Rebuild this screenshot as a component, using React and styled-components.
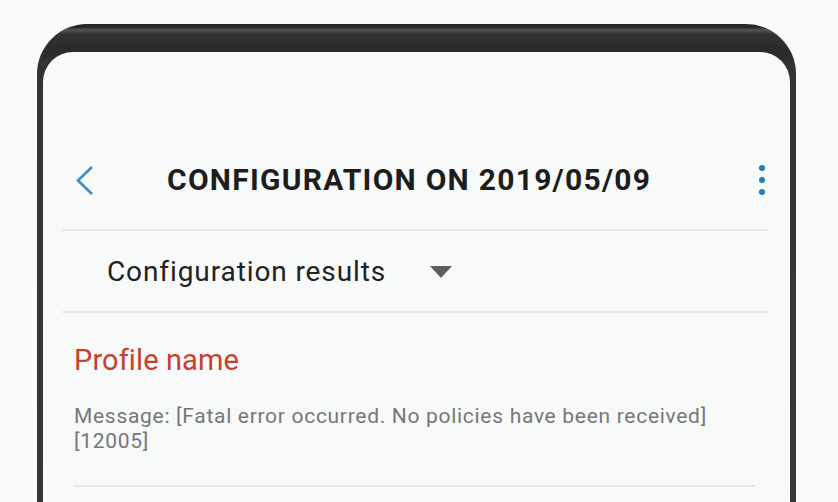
import React from 'react';
import styled, { createGlobalStyle } from 'styled-components';

const GlobalStyle = createGlobalStyle`
  html, body {
    margin: 0;
    padding: 0;
    background: #f9fafa;
    font-family: Roboto, "Liberation Sans", sans-serif;
    overflow: hidden;
  }
`;

const Page = styled.div`
  width: 838px;
  height: 502px;
  padding: 24px 0 0 37px;
  box-sizing: border-box;
  overflow: hidden;
`;

const Frame = styled.div`
  width: 759px;
  height: 520px;
  box-sizing: border-box;
  padding: 28px 6px 0 6px;
  border-radius: 50px 50px 0 0;
  background: linear-gradient(
    to bottom,
    #262626 0px,
    #262626 3px,
    #555 6px,
    #333 10px,
    #2a2a2a 28px,
    #333 40px,
    #383838 100%
  );
`;

const Screen = styled.div`
  height: 100%;
  background: #f8f9f9;
  border-radius: 30px 30px 0 0;
  padding-top: 88px;
  box-sizing: border-box;
`;

const Header = styled.div`
  display: flex;
  align-items: center;
  height: 89px;
  box-sizing: border-box;
  padding: 0 25px 10px 31px;
`;

const BackButton = styled.button`
  display: flex;
  align-items: center;
  background: none;
  border: 0;
  padding: 0;
  width: 24px;
  height: 36px;
  cursor: pointer;
`;

const Title = styled.h1`
  margin: 0 0 0 69px;
  font-size: 30px;
  font-weight: 700;
  color: #1d1d1d;
  letter-spacing: 1.25px;
  white-space: nowrap;
`;

const Kebab = styled.div`
  margin-left: auto;
  display: flex;
  flex-direction: column;
  gap: 6px;
  span {
    width: 6px;
    height: 6px;
    border-radius: 50%;
    background: #1f7cbf;
  }
`;

const Divider = styled.div`
  height: 2px;
  background: #e9e7e7;
  margin: ${p => p.$inset ? '0 35px 0 31px' : '0 22px 0 19px'};
`;

const SelectRow = styled.div`
  display: flex;
  align-items: center;
  height: 80px;
  padding-left: 64px;
`;

const SelectLabel = styled.span`
  font-size: 28px;
  color: #222;
  letter-spacing: 0.9px;
`;

const Caret = styled.span`
  margin-left: 44px;
  width: 0;
  height: 0;
  border-left: 11px solid transparent;
  border-right: 11px solid transparent;
  border-top: 12px solid #5e5e5e;
  margin-top: 2px;
`;

const Result = styled.div`
  padding: 30px 40px 31px 31px;
`;

const ProfileName = styled.div`
  font-size: 29px;
  color: #c8402f;
  line-height: 34px;
  letter-spacing: 0.1px;
  margin-bottom: 27px;
`;

const Message = styled.div`
  font-size: 21px;
  line-height: 25px;
  letter-spacing: 0.7px;
  color: #777;
`;

export default function App() {
  return (
    <>
      <GlobalStyle />
      <Page>
        <Frame>
          <Screen>
            <Header>
              <BackButton aria-label="Back">
                <svg width="24" height="36" viewBox="0 0 24 36">
                  <path d="M18 5 L4 18.5 L18 32" fill="none" stroke="#3a8fc8" strokeWidth="2.6" />
                </svg>
              </BackButton>
              <Title>CONFIGURATION ON 2019/05/09</Title>
              <Kebab>
                <span />
                <span />
                <span />
              </Kebab>
            </Header>
            <Divider />
            <SelectRow>
              <SelectLabel>Configuration results</SelectLabel>
              <Caret />
            </SelectRow>
            <Divider />
            <Result>
              <ProfileName>Profile name</ProfileName>
              <Message>
                Message: [Fatal error occurred. No policies have been received]
                <br />
                [12005]
              </Message>
            </Result>
            <Divider $inset />
          </Screen>
        </Frame>
      </Page>
    </>
  );
}
